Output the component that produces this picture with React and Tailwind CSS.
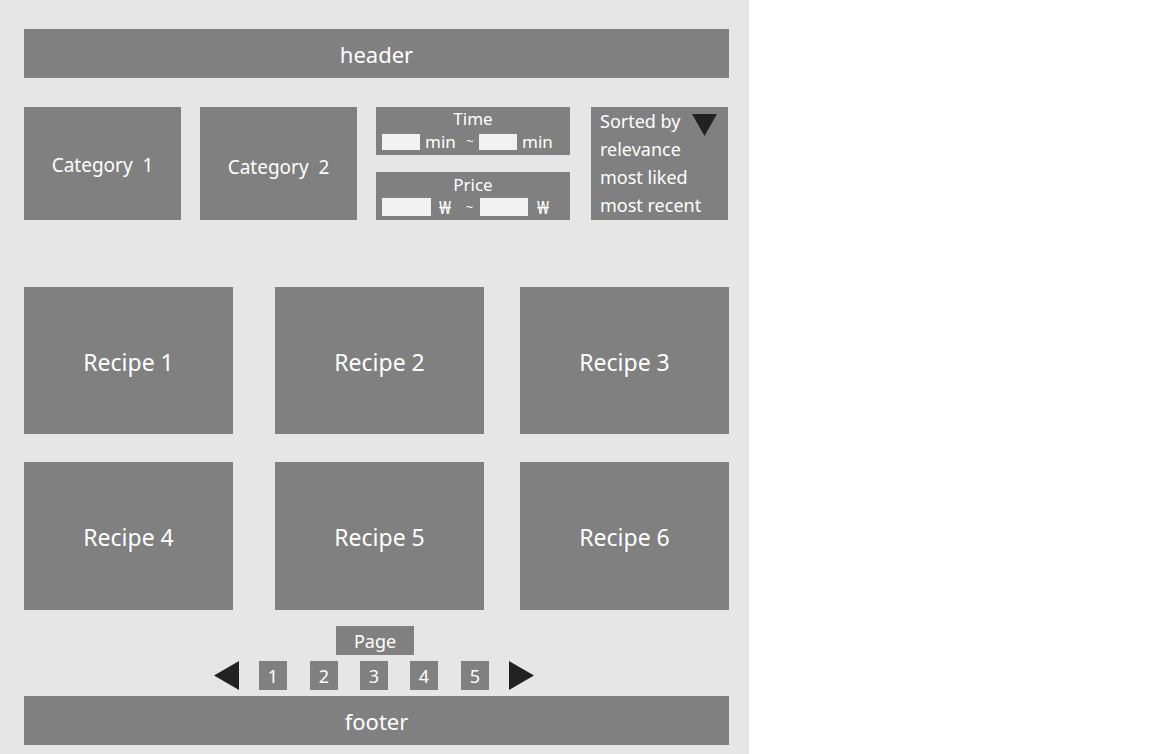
import React from "react";

const font = { fontFamily: '"Noto Sans", "Noto Sans CJK KR", sans-serif' };

function Box({ className = "", children }) {
  return (
    <div className={`bg-[#808080] text-white flex items-center justify-center ${className}`}>
      {children}
    </div>
  );
}

function Tri({ dir, className }) {
  const pts = dir === "left" ? "25,0 25,29 0,14.5" : dir === "right" ? "0,0 0,29 25,14.5" : "0,0 25,0 12.5,22";
  const h = dir === "down" ? 22 : 29;
  return (
    <svg width="25" height={h} viewBox={`0 0 25 ${h}`} className={className}>
      <polygon points={pts} fill="#222222" />
    </svg>
  );
}

export default function App() {
  const recipes = [
    ["Recipe 1", "Recipe 2", "Recipe 3"],
    ["Recipe 4", "Recipe 5", "Recipe 6"],
  ];

  return (
    <div style={font} className="w-[749px] min-h-screen bg-[#e6e6e6] pt-[29px] pl-6 pr-5 flex flex-col">
      <Box className="h-[49px] text-[22px] pt-[2px]">header</Box>

      {/* filters */}
      <div className="flex mt-[29px] h-[113px]">
        <Box className="w-[157px] text-[19px] pt-[4px]">Category&nbsp; 1</Box>
        <Box className="w-[157px] ml-[19px] text-[19px] pt-[7px]">Category&nbsp; 2</Box>
        <div className="w-[194px] ml-[19px] flex flex-col">
          <div className="h-[48px] bg-[#808080] text-white flex flex-col items-center text-[17px] leading-none">
            <div className="mt-[3px]">Time</div>
            <div className="flex items-center mt-[6px] w-full pl-[6px]">
              <div className="w-[38px] h-[16px] bg-[#f2f2f2]" />
              <span className="w-[41px] pl-[5px]">min</span>
              <span className="w-[18px] text-center text-[13px]">~</span>
              <div className="w-[38px] h-[16px] bg-[#f2f2f2]" />
              <span className="pl-[5px]">min</span>
            </div>
          </div>
          <div className="h-[48px] mt-[17px] bg-[#808080] text-white flex flex-col items-center text-[17px] leading-none">
            <div className="mt-[4px]">Price</div>
            <div className="flex items-center mt-[5px] w-full pl-[6px]">
              <div className="w-[49px] h-[18px] bg-[#f2f2f2]" />
              <span className="w-[28px] pl-[8px] text-[18px]">₩</span>
              <span className="w-[21px] text-center text-[13px]">~</span>
              <div className="w-[48px] h-[18px] bg-[#f2f2f2]" />
              <span className="pl-[9px] text-[18px]">₩</span>
            </div>
          </div>
        </div>
        <div className="w-[137px] ml-[21px] bg-[#808080] text-white text-[18px] leading-[28px] pl-[9px] relative">
          <div>Sorted by</div>
          <div>relevance</div>
          <div>most liked</div>
          <div>most recent</div>
          <Tri dir="down" className="absolute left-[101px] top-[7px]" />
        </div>
      </div>

      {/* recipes */}
      <div className="mt-[67px] flex flex-col">
        {recipes.map((row, i) => (
          <div key={i} className={`flex ${i === 0 ? "h-[147px]" : "h-[148px] mt-[28px]"}`}>
            <Box className="w-[209px] text-[23px] pt-[3px]">{row[0]}</Box>
            <Box className="w-[209px] ml-[42px] text-[23px] pt-[3px]">{row[1]}</Box>
            <Box className="w-[209px] ml-[36px] text-[23px] pt-[3px]">{row[2]}</Box>
          </div>
        ))}
      </div>

      {/* pagination */}
      <Box className="mt-[16px] ml-[312px] w-[78px] h-[29px] text-[18px] pt-[1px]">Page</Box>
      <div className="flex items-center mt-[6px] h-[29px] ml-[190px]">
        <Tri dir="left" />
        <Box className="w-[28px] h-[29px] ml-[20px] text-[18px] pt-[1px]">1</Box>
        <Box className="w-[28px] h-[29px] ml-[23px] text-[18px] pt-[1px]">2</Box>
        <Box className="w-[28px] h-[29px] ml-[22px] text-[18px] pt-[1px]">3</Box>
        <Box className="w-[28px] h-[29px] ml-[22px] text-[18px] pt-[1px]">4</Box>
        <Box className="w-[28px] h-[29px] ml-[23px] text-[18px] pt-[1px]">5</Box>
        <Tri dir="right" className="ml-[20px]" />
      </div>

      <Box className="mt-[6px] h-[49px] text-[22px] pt-[2px]">footer</Box>
    </div>
  );
}
